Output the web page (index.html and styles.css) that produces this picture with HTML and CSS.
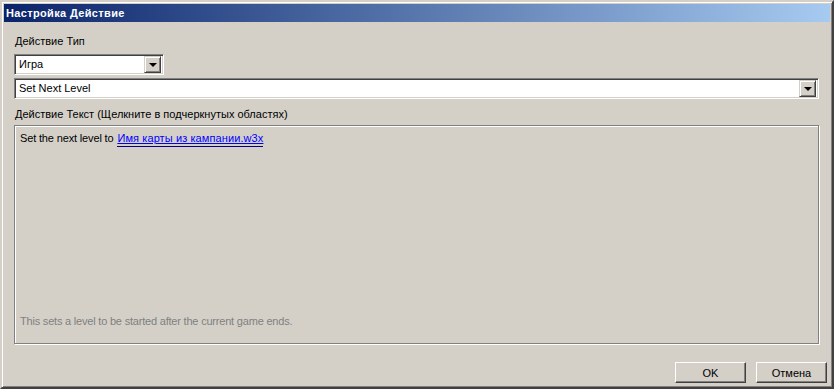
FILE: index.html
```html
<!DOCTYPE html>
<html lang="ru">
<head>
    <meta charset="UTF-8">
    <title>Настройка Действие</title>
    <link rel="stylesheet" href="styles.css">
</head>
<body>

<div class="window">
    <div class="titleBar">Настройка Действие</div>

    <div class="content">
        <div class="label firstLabel">Действие Тип</div>

        <div class="combo shortCombo">
            <span class="comboText">Игра</span>
            <span class="comboButton"><span class="arrow"></span></span>
        </div>

        <div class="combo wideCombo">
            <span class="comboText">Set Next Level</span>
            <span class="comboButton"><span class="arrow"></span></span>
        </div>

        <div class="label secondLabel">Действие Текст (Щелкните в подчеркнутых областях)</div>

        <div class="textPanel">
            <div class="actionLine">
                Set the next level to <a class="param" href="#">Имя карты из кампании.w3x</a>
            </div>
            <div class="hint">This sets a level to be started after the current game ends.</div>
        </div>

        <div class="buttonRow">
            <button class="pushButton">OK</button>
            <button class="pushButton">Отмена</button>
        </div>
    </div>
</div>

</body>
</html>
```

FILE: styles.css
```css
body {
    margin: 0;
    padding: 0;
    background: #d4d0c8;
    font-family: "Liberation Sans", Arial, sans-serif;
    font-size: 11px;
    color: #000;
}

.window {
    width: 834px;
    height: 389px;
    box-sizing: border-box;
    border: 2px solid;
    border-color: #d4d0c8 #404040 #404040 #d4d0c8;
    box-shadow: inset 1px 1px #fff, inset -1px -1px #808080;
    padding: 2px;
    background: #d4d0c8;
}

.titleBar {
    height: 18px;
    line-height: 18px;
    padding-left: 2px;
    background: linear-gradient(to right, #0a246a, #a6caf0);
    color: #fff;
    font-weight: bold;
    font-size: 11px;
    letter-spacing: 0.35px;
}

.content {
    padding: 0 11px 0 10px;
}

.label {
    line-height: 13px;
    padding-left: 1px;
}

.firstLabel {
    margin-top: 13px;
}

.secondLabel {
    margin-top: 9px;
}

.combo {
    height: 21px;
    box-sizing: border-box;
    border: 1px solid;
    border-color: #808080 #fff #fff #808080;
    box-shadow: inset 1px 1px #404040, inset -1px -1px #d4d0c8;
    background: #fff;
    display: flex;
    align-items: center;
    padding: 2px;
}

.shortCombo {
    width: 150px;
    margin-top: 6px;
}

.wideCombo {
    margin-top: 3px;
}

.comboText {
    flex: 1;
    padding-left: 2px;
    line-height: 15px;
}

.comboButton {
    width: 17px;
    height: 17px;
    box-sizing: border-box;
    border: 1px solid;
    border-color: #d4d0c8 #404040 #404040 #d4d0c8;
    box-shadow: inset 1px 1px #fff, inset -1px -1px #808080;
    background: #d4d0c8;
    display: flex;
    justify-content: center;
    align-items: center;
}

.arrow {
    width: 0;
    height: 0;
    border-left: 4px solid transparent;
    border-right: 4px solid transparent;
    border-top: 4px solid #000;
    margin-top: 1px;
}

.textPanel {
    margin-top: 4px;
    height: 219px;
    box-sizing: border-box;
    border: 1px solid #808080;
    box-shadow: inset 1px 1px #fff, 1px 1px #fff;
    padding: 6px 6px 15px 5px;
    display: flex;
    flex-direction: column;
    justify-content: space-between;
    line-height: 13px;
}

.actionLine {
    letter-spacing: -0.15px;
}

.param {
    color: #0000ff;
    text-decoration: underline;
    border-bottom: 1px solid #000080;
    padding-bottom: 2px;
    margin-left: 1px;
    letter-spacing: 0.1px;
}

.hint {
    color: #808080;
    letter-spacing: -0.2px;
}

.buttonRow {
    display: flex;
    justify-content: flex-end;
    gap: 10px;
    margin-top: 18px;
    margin-right: -8px;
}

.pushButton {
    width: 71px;
    height: 21px;
    box-sizing: border-box;
    border: 1px solid;
    border-color: #fff #404040 #404040 #fff;
    box-shadow: inset -1px -1px #808080;
    background: #d4d0c8;
    font-family: "Liberation Sans", Arial, sans-serif;
    font-size: 11px;
    color: #000;
    padding: 0;
}
```
